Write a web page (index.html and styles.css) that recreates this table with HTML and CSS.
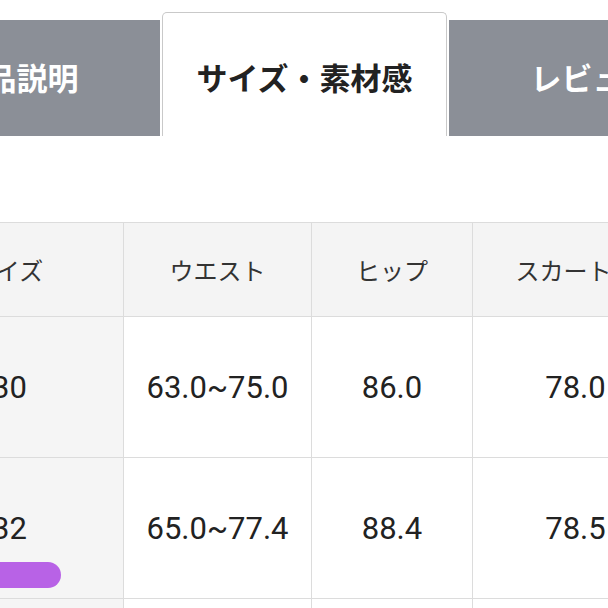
FILE: index.html
```html
<!DOCTYPE html>
<html lang="ja">
<head>
<meta charset="utf-8">
<link rel="stylesheet" href="styles.css">
</head>
<body>
<div class="page">
  <nav class="tabs">
    <div class="tab">商品説明</div>
    <div class="tab active">サイズ・素材感</div>
    <div class="tab">レビュー</div>
  </nav>
  <table class="size-table">
    <colgroup>
      <col class="c1"><col class="c2"><col class="c3"><col class="c4"><col class="c5">
    </colgroup>
    <thead>
      <tr><th>サイズ</th><th>ウエスト</th><th>ヒップ</th><th>スカート丈</th><th>裾周り</th></tr>
    </thead>
    <tbody>
      <tr><th>30</th><td>63.0~75.0</td><td>86.0</td><td>78.0</td><td>150.0</td></tr>
      <tr><th>32<span class="mark"></span></th><td>65.0~77.4</td><td>88.4</td><td>78.5</td><td>152.0</td></tr>
      <tr><th>34</th><td>67.0~79.8</td><td>90.8</td><td>79.0</td><td>154.0</td></tr>
    </tbody>
  </table>
</div>
</body>
</html>
```
FILE: styles.css
```css
html, body {
  margin: 0;
  padding: 0;
  background: #fff;
  overflow: hidden;
  width: 608px;
  height: 608px;
}
.page {
  font-family: Roboto, "Noto Sans CJK JP", sans-serif;
  color: #222;
}
.tabs {
  display: flex;
  align-items: flex-end;
  gap: 2px;
  margin-left: -127px;
  padding-top: 12px;
  width: 900px;
}
.tab {
  flex: 0 0 287px;
  box-sizing: border-box;
  height: 116px;
  display: flex;
  align-items: center;
  justify-content: center;
  background: #8b8f97;
  color: #fff;
  font-family: "Noto Sans CJK JP", sans-serif;
  font-weight: 700;
  font-size: 31px;
  padding-bottom: 4px;
}
.tab.active {
  flex-basis: 285px;
  height: 124px;
  background: #fff;
  color: #222;
  border: 1px solid #c9c9c9;
  border-bottom: none;
  border-radius: 5px 5px 0 0;
  padding-top: 4px;
  padding-bottom: 0;
}
.size-table {
  margin-top: 86px;
  margin-left: -109px;
  border-collapse: collapse;
  table-layout: fixed;
  width: 1000px;
}
.c1 { width: 232px; }
.c2 { width: 188px; }
.c3 { width: 161px; }
.c4 { width: 206px; }
.c5 { width: 213px; }
.size-table th,
.size-table td {
  border: 1px solid #dcdcdc;
  text-align: center;
  vertical-align: middle;
  padding: 0;
}
.size-table thead th {
  height: 93px;
  background: #f4f4f4;
  font-family: "Noto Sans CJK JP", sans-serif;
  font-weight: 400;
  font-size: 24px;
  color: #333;
}
.size-table tbody th,
.size-table tbody td {
  height: 140px;
  font-size: 31px;
  font-weight: 400;
  color: #222;
}
.size-table tbody th {
  background: #f5f5f5;
  position: relative;
  padding-left: 4px;
}
.mark {
  position: absolute;
  right: 62px;
  bottom: 10px;
  width: 120px;
  height: 26px;
  border-radius: 13px;
  background: #b862e6;
}
```
